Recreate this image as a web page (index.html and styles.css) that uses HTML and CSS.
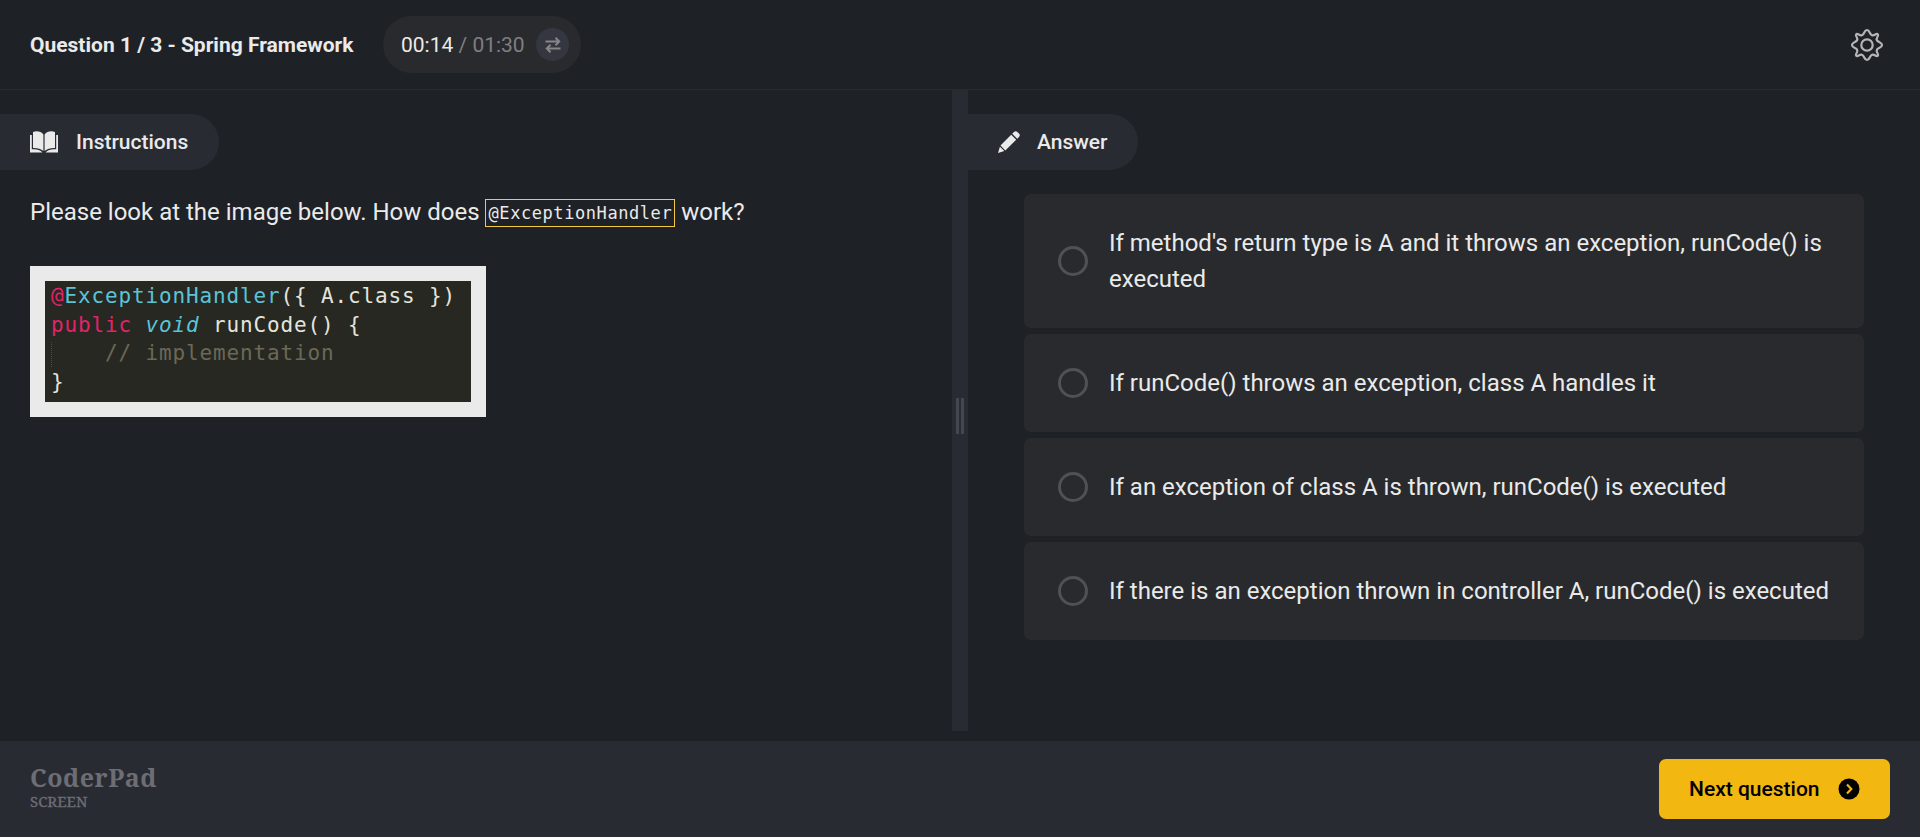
FILE: index.html
```html
<!DOCTYPE html>
<html lang="en">
<head>
<meta charset="utf-8">
<title>Question 1 / 3 - Spring Framework</title>
<link rel="stylesheet" href="styles.css">
</head>
<body>
<div class="app">
  <header class="header">
    <h1 class="title">Question 1 / 3 - Spring Framework</h1>
    <div class="timer">
      <span class="time"><span class="elapsed">00:14</span> / 01:30</span>
      <span class="swap"><svg width="16" height="16" viewBox="0 0 16 16" fill="none" stroke="#858687" stroke-width="2"><path d="M.5 4.500H14M10.500 .8l3.700 3.700L10.500 8.200M15.500 11.500H2M5.500 7.800L1.800 11.500 5.500 15.200"/></svg></span>
    </div>
    <svg class="gear" width="34" height="34" viewBox="0 0 34 34" fill="none" stroke="#b4b5b6" stroke-width="2.2" stroke-linejoin="round"><path d="M17 2C20 2 19.200 6.200 22 7.200C24.500 8.200 26.300 4.700 27.800 6.200C29.300 7.700 25.800 9.500 26.800 12C27.800 14.700 32 14 32 17C32 20 27.800 19.300 26.800 22C25.800 24.500 29.300 26.300 27.800 27.800C26.300 29.300 24.500 25.800 22 26.800C19.300 27.800 20 32 17 32C14 32 14.700 27.800 12 26.800C9.500 25.800 7.700 29.300 6.200 27.800C4.700 26.300 8.200 24.500 7.200 22C6.200 19.300 2 20 2 17C2 14 6.200 14.700 7.200 12C8.200 9.500 4.700 7.700 6.200 6.200C7.700 4.700 9.500 8.200 12 7.200C14.700 6.200 14 2 17 2Z"/><circle cx="17" cy="17" r="5.700"/></svg>
  </header>
  <main class="main">
    <section class="panel instructions">
      <h2 class="tab"><svg width="28" height="22" viewBox="0 0 28 22" fill="#eaeaea"><path d="M3 1C6 -.2 11 -.2 13.400 3.500V20C11 17.800 7 16.800 3 17ZM14.600 3.500C17 -.2 22 -.2 25 1V17C21 16.800 17 17.800 14.600 20Z"/><path d="M0 4H1.800V18.300C6 17.800 10 18.500 12.500 21.500H0ZM28 4H26.200V18.300C22 17.800 18 18.500 15.500 21.500H28Z"/></svg>Instructions</h2>
      <p class="prompt">Please look at the image below. How does <code class="inline">@ExceptionHandler</code> work?</p>
      <pre class="code"><span class="red">@</span><span class="blue">ExceptionHandler</span>({ A.class })
<span class="red">public</span> <i class="blue">void</i> runCode() {
<span class="guide"></span><span class="comment">    // implementation</span>
}</pre>
    </section>
    <div class="divider"><span class="grip"></span></div>
    <section class="panel answer">
      <h2 class="tab answer-tab"><svg width="22" height="22" viewBox="0 0 22 22" fill="#eaeaea"><path d="M13.200 3.800L18.200 8.800 7.300 19.500 2.500 14.600ZM14.200 2.800L16 1C17.200-.2 18.600.1 19.600 1.200L21 2.600C22 3.700 22.100 4.900 21 6L19.200 7.800ZM1.900 15.700L6.300 20.100 0 22Z"/></svg>Answer</h2>
      <div class="options">
        <label class="option"><span class="radio"></span><span>If method's return type is A and it throws an exception, runCode() is executed</span></label>
        <label class="option"><span class="radio"></span><span>If runCode() throws an exception, class A handles it</span></label>
        <label class="option"><span class="radio"></span><span>If an exception of class A is thrown, runCode() is executed</span></label>
        <label class="option"><span class="radio"></span><span>If there is an exception thrown in controller A, runCode() is executed</span></label>
      </div>
    </section>
  </main>
  <footer class="footer">
    <div class="brand"><span class="brand-name">CoderPad</span><span class="brand-sub">SCREEN</span></div>
    <button class="next">Next question<svg width="22" height="22" viewBox="0 0 22 22"><circle cx="11" cy="11" r="10.500" fill="#000"/><path d="M9 6.500L13.300 11 9 15.500" fill="none" stroke="#f2b711" stroke-width="2.200"/></svg></button>
  </footer>
</div>
</body>
</html>
```
FILE: styles.css
```css
* { box-sizing: border-box; }
body { margin: 0; background: #1e2126; color: #eaeaea; font-family: Roboto, "Open Sans", sans-serif; }
h1, h2, p, pre { margin: 0; }
svg { display: block; flex: none; }
.app { height: 837px; display: flex; flex-direction: column; overflow: hidden; }
.header { height: 90px; flex: none; display: flex; align-items: center; padding: 0 36px 0 30px; border-bottom: 1px solid #282a2e; }
.title { font-size: 21px; font-weight: 700; white-space: nowrap; width: 353px; }
.timer { height: 57px; width: 198px; border-radius: 29px; background: #292a2d; display: flex; align-items: center; justify-content: space-between; padding: 0 12px 0 18px; }
.time { font-size: 21px; color: #7e7f81; white-space: nowrap; }
.elapsed { color: #eaeaea; }
.swap { width: 33px; height: 33px; border-radius: 50%; background: #353740; display: grid; place-items: center; }
.gear { margin-left: auto; }
.main { height: 651px; flex: none; display: flex; }
.instructions { width: 952px; padding-top: 24px; }
.tab { width: 219px; height: 56px; padding-left: 30px; border-radius: 0 28px 28px 0; background: #292b33; display: flex; align-items: center; gap: 18px; font-size: 21px; font-weight: 500; }
.tab svg { margin-bottom: 1px; }
.prompt { margin: 24px 0 0 30px; height: 36px; font-size: 24px; line-height: 36px; }
.inline { display: inline-block; height: 28px; padding: 0 2px 0 3px; border: 1px solid #f4c744; font: 17px/26px "DejaVu Sans Mono", monospace; letter-spacing: .57px; vertical-align: 1px; margin-left: -1px; }
.code { margin: 36px 0 0 30px; width: 456px; height: 151px; border: 15px solid #eaeaea; background: #272822; color: #e4e4dc; padding: 1px 0 0 6px; font: 21px/28.500px "DejaVu Sans Mono", monospace; letter-spacing: .860px; }
.red { color: #e0246a; }
.blue { color: #5bc3d8; }
.comment { color: #6b6858; }
.guide { display: inline-block; width: 1px; height: 25px; margin-right: -1px; vertical-align: middle; border-left: 1px dotted #4b4c42; }
.divider { width: 16px; height: 641px; background: #292b33; display: grid; justify-content: center; align-content: start; padding-top: 308px; }
.grip { width: 8px; height: 36px; border: solid #45474e; border-width: 0 3px; }
.answer { width: 952px; padding-top: 24px; }
.answer-tab { width: 170px; gap: 17px; }
.options { margin: 24px 56px 0; display: flex; flex-direction: column; gap: 6px; }
.option { min-height: 98px; padding: 31px 30px 31px 34px; border-radius: 7px; background: #292a2d; display: flex; align-items: center; gap: 21px; font-size: 24px; line-height: 36px; }
.option:first-child { min-height: 134px; }
.radio { width: 30px; height: 30px; flex: none; border: 3px solid #505154; border-radius: 50%; }
.footer { flex: 1; background: #292b33; display: flex; justify-content: space-between; align-items: flex-start; padding: 18px 30px 0 30px; }
.brand { display: flex; flex-direction: column; color: #6c6e73; font-family: "Noto Serif", "DejaVu Serif", serif; padding-top: 2px; }
.brand-name { font-size: 25px; line-height: 32px; font-weight: 700; letter-spacing: .500px; }
.brand-sub { font-size: 15px; line-height: 16px; -webkit-text-stroke: .3px #6c6e73; }
.next { width: 231px; height: 60px; border: 0; border-radius: 7px; background: #f2b711; color: #000; padding: 0 30px; display: flex; align-items: center; justify-content: space-between; font: 500 21px Roboto, sans-serif; white-space: nowrap; }
```
